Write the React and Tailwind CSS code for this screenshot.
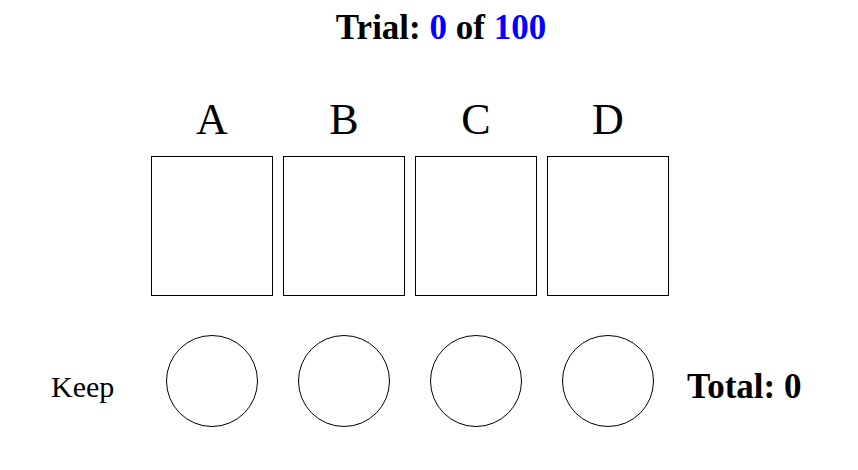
const decks = ["A", "B", "C", "D"];

export default function App() {
  return (
    <main className="min-h-screen bg-white pb-8 font-['Liberation_Serif','Times_New_Roman',serif] text-black">
      <h1 className="pt-2 pl-6 text-center text-[35px] leading-[40px] font-bold">
        Trial: <span className="text-[#0000ff]">0</span> of <span className="text-[#0000ff]">100</span>
      </h1>
      <div className="mx-auto mt-12 grid w-fit grid-cols-[100px_repeat(4,122px)_138px] gap-x-[10px]">
        {decks.map((deck, i) => (
          <div key={deck} className={i === 0 ? "col-start-2" : ""}>
            <div className="text-center text-[44px] leading-[48px]" id={`deck-${deck}`}>{deck}</div>
            <button
              type="button"
              aria-labelledby={`deck-${deck}`}
              className="mt-3 block h-[140px] w-full border border-black bg-white"
            />
          </div>
        ))}
        <div className="col-start-1 mt-[39px] flex h-[92px] items-center pt-3 pl-[10px] text-[30px] leading-[36px]">Keep</div>
        {decks.map((deck) => (
          <button
            key={deck}
            type="button"
            aria-label={`Keep ${deck}`}
            className="mt-[39px] size-[92px] justify-self-center rounded-full border border-black bg-white"
          />
        ))}
        <div className="mt-[39px] flex h-[92px] items-center pt-3 pl-2 text-[35px] leading-[40px] font-bold whitespace-nowrap">
          Total: 0
        </div>
      </div>
    </main>
  );
}
